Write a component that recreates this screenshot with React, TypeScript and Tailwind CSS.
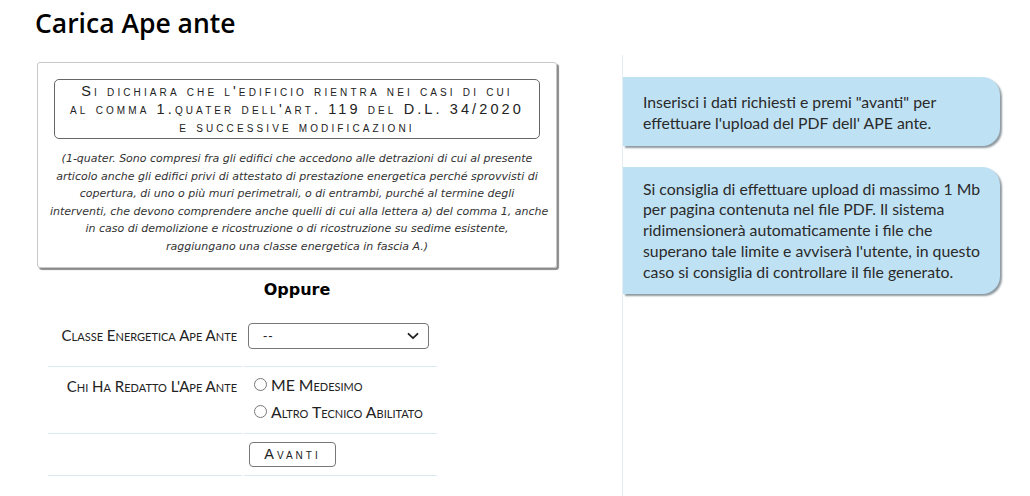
import React from 'react';

const Radio: React.FC<{ label: string }> = ({ label }) => (
  <label className="flex items-center gap-[4px] h-[27px]">
    <span className="w-[13px] h-[13px] rounded-full border border-[#777] bg-white" />
    <span className="[font-variant:small-caps] text-[15.8px] text-[#222]">{label}</span>
  </label>
);

const App: React.FC = () => {
  return (
    <div className="w-[1030px] h-[496px] overflow-hidden bg-white text-[#222] font-['Lato',sans-serif]">
      <h1 className="pl-[35px] pt-[5px] h-[55px] text-[26.5px] leading-[36px] font-semibold text-black font-['Open_Sans',sans-serif]">
        Carica Ape ante
      </h1>

      <div className="flex">
        {/* left column */}
        <div className="w-[622px] pl-[37px] pt-[7px]">
          <div className="w-[520px] h-[206px] px-[16px] pt-[16px] border border-[#c8c8c8] rounded-[3px] shadow-[2px_2px_1px_#8a8a8a]">
            <div className="h-[60px] flex items-center justify-center border border-[#666] rounded-[5px] text-center text-[14.5px] leading-[18px] tracking-[3.1px] [font-variant:small-caps] text-[#222] font-['Liberation_Sans',sans-serif]">
              <p>
                Si dichiara che l'edificio rientra nei casi di cui
                <br />
                al comma 1.quater dell'art. 119 del D.L. 34/2020
                <br />
                e successive modificazioni
              </p>
            </div>
            <p className="mt-[11px] -mx-[4px] text-center italic whitespace-nowrap text-[11px] leading-[17.6px] text-[#333] font-['DejaVu_Sans',sans-serif]">
              (1-quater. Sono compresi fra gli edifici che accedono alle detrazioni di cui al presente
              <br />
              articolo anche gli edifici privi di attestato di prestazione energetica perché sprovvisti di
              <br />
              copertura, di uno o più muri perimetrali, o di entrambi, purché al termine degli
              <br />
              interventi, che devono comprendere anche quelli di cui alla lettera a) del comma 1, anche
              <br />
              in caso di demolizione e ricostruzione o di ricostruzione su sedime esistente,
              <br />
              raggiungano una classe energetica in fascia A.)
            </p>
          </div>

          <h2 className="w-[520px] mt-[10px] text-center text-[16px] leading-[24px] font-bold text-black font-['DejaVu_Sans',sans-serif]">
            Oppure
          </h2>

          <div className="w-[389px] ml-[11px] mt-[3px] grid grid-cols-[194px_193px] gap-x-[2px]">
            <div className="h-[62px] flex items-center justify-end pr-[5px] border-b border-[#dbe9f1] [font-variant:small-caps] text-[15px]">
              Classe Energetica Ape Ante
            </div>
            <div className="h-[62px] flex items-center pl-[4px] border-b border-[#dbe9f1]">
              <div className="w-[181px] h-[26px] flex items-center justify-between pl-[14px] pr-[9px] border border-[#777] rounded-[4px] text-[13px] font-['Liberation_Sans',sans-serif]">
                <span className="tracking-[1px]">--</span>
                <svg width="12" height="8" viewBox="0 0 12 8" fill="none" stroke="#222" strokeWidth="1.8" strokeLinecap="round" strokeLinejoin="round">
                  <path d="M1.5 1.8 L6 6.2 L10.5 1.8" />
                </svg>
              </div>
            </div>

            <div className="h-[67px] flex justify-end pr-[5px] pt-[8px] border-b border-[#dbe9f1] [font-variant:small-caps] text-[15px]">
              Chi Ha Redatto L'Ape Ante
            </div>
            <div className="h-[67px] flex flex-col pl-[10px] pt-[4px] border-b border-[#dbe9f1]">
              <Radio label="ME Medesimo" />
              <Radio label="Altro Tecnico Abilitato" />
            </div>

            <div className="h-[42px] border-b border-[#dbe9f1]" />
            <div className="h-[42px] flex items-center pl-[5px] border-b border-[#dbe9f1]">
              <button className="w-[87px] h-[25px] border border-[#777] rounded-[4px] bg-white text-[14.5px] tracking-[3px] [font-variant:small-caps] font-['Liberation_Sans',sans-serif] text-[#222]">
                Avanti
              </button>
            </div>
          </div>
        </div>

        {/* right column */}
        <div className="h-[441px] flex-1 border-l border-[#e3edf3] pt-[22px]">
          <div className="w-[377px] h-[69px] flex items-center pl-[20px] rounded-r-[18px] bg-[#bfe1f4] shadow-[2px_2px_2px_#8f9aa0] text-[15.8px] leading-[21px] text-[#2a2a2a]">
            <p>
              Inserisci i dati richiesti e premi "avanti" per
              <br />
              effettuare l'upload del PDF dell' APE ante.
            </p>
          </div>
          <div className="w-[377px] h-[127px] mt-[21px] flex items-center pl-[20px] rounded-r-[18px] bg-[#bfe1f4] shadow-[2px_2px_2px_#8f9aa0] text-[15.8px] leading-[20.8px] text-[#2a2a2a]">
            <p>
              Si consiglia di effettuare upload di massimo 1 Mb
              <br />
              per pagina contenuta nel file PDF. Il sistema
              <br />
              ridimensionerà automaticamente i file che
              <br />
              superano tale limite e avviserà l'utente, in questo
              <br />
              caso si consiglia di controllare il file generato.
            </p>
          </div>
        </div>
      </div>
    </div>
  );
};

export default App;
